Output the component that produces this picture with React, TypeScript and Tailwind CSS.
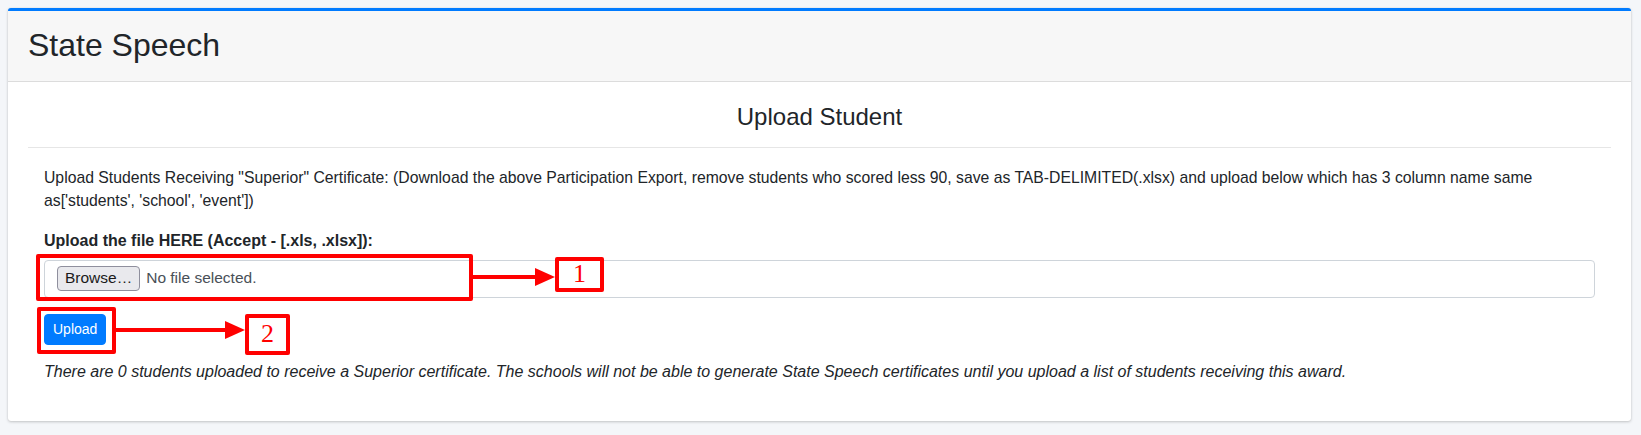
import React from 'react';

function Arrow({ width }: { width: number }) {
  return (
    <svg width={width} height={20} viewBox={`0 0 ${width} 20`} className="shrink-0">
      <rect x={0} y={8} width={width - 18} height={4} fill="#ff0000" />
      <polygon points={`${width - 20},1 ${width},10 ${width - 20},19`} fill="#ff0000" />
    </svg>
  );
}

export default function App() {
  return (
    <div className="min-h-screen bg-[#f4f6f9] pt-2 pl-2 pr-[10px] pb-3 font-['Liberation_Sans',Arial,sans-serif] text-[#212529]">
      <div className="bg-white border-t-[3px] border-[#007bff] rounded-[3px] shadow-[0_0_1px_rgba(0,0,0,0.125),0_1px_3px_rgba(0,0,0,0.2)]">
        {/* Header */}
        <div className="h-[71px] flex items-center px-5 bg-[#f7f7f7] border-b border-[#dcdcdc]">
          <h2 className="text-[32px] leading-[1.2] -mt-[2px]">State Speech</h2>
        </div>

        {/* Body */}
        <div className="px-5 pt-[21px] pb-[38px]">
          <h4 className="text-center text-[24px] leading-[28px]">Upload Student</h4>
          <hr className="mt-4 border-t border-[#e6e6e6]" />

          <div className="px-4 pt-[19px] text-[15.75px] leading-[22.5px]">
            <p className="mb-[18px]">
              Upload Students Receiving "Superior" Certificate: (Download the above Participation Export, remove students who scored less 90, save as TAB-DELIMITED(.xlsx) and upload below which has 3 column name same as['students', 'school', 'event'])
            </p>

            <label className="block font-bold text-[16px] mb-[7px]">Upload the file HERE (Accept - [.xls, .xlsx]):</label>

            <div className="relative">
              <div className="h-[38px] flex items-center px-3 border border-[#ced4da] rounded-[4px] bg-white">
                <span className="h-[25px] px-[7px] flex items-center bg-[#e9e9ed] border border-[#8f8f9d] rounded-[4px] text-[15.5px] text-[#1a1a1a]">Browse…</span>
                <span className="ml-[6px] text-[15.5px] text-[#495057]">No file selected.</span>
              </div>
              {/* annotation 1 */}
              <div className="absolute -left-2 -top-[6px] flex items-center pointer-events-none">
                <div className="w-[437px] h-[47px] border-4 border-[#ff0000] rounded-[2px]" />
                <Arrow width={82} />
                <div className="w-[49px] h-[35px] -mt-[6px] border-4 border-[#ff0000] rounded-[2px] flex items-center justify-center text-[#ff0000] text-[26px] font-['Liberation_Serif',serif]">
                  1
                </div>
              </div>
            </div>

            <div className="relative mt-4">
              <button className="h-[31px] px-2 bg-[#007bff] text-white text-[14px] rounded-[4px] border border-[#007bff]">Upload</button>
              {/* annotation 2 */}
              <div className="absolute -left-[7px] -top-2 flex items-center pointer-events-none">
                <div className="w-[79px] h-[47px] border-4 border-[#ff0000] rounded-[2px]" />
                <Arrow width={129} />
                <div className="w-[45px] h-[41px] mt-[8px] border-4 border-[#ff0000] rounded-[2px] flex items-center justify-center text-[#ff0000] text-[26px] font-['Liberation_Serif',serif]">
                  2
                </div>
              </div>
            </div>

            <p className="mt-4 italic text-[16px]">
              There are 0 students uploaded to receive a Superior certificate. The schools will not be able to generate State Speech certificates until you upload a list of students receiving this award.
            </p>
          </div>
        </div>
      </div>
    </div>
  );
}
